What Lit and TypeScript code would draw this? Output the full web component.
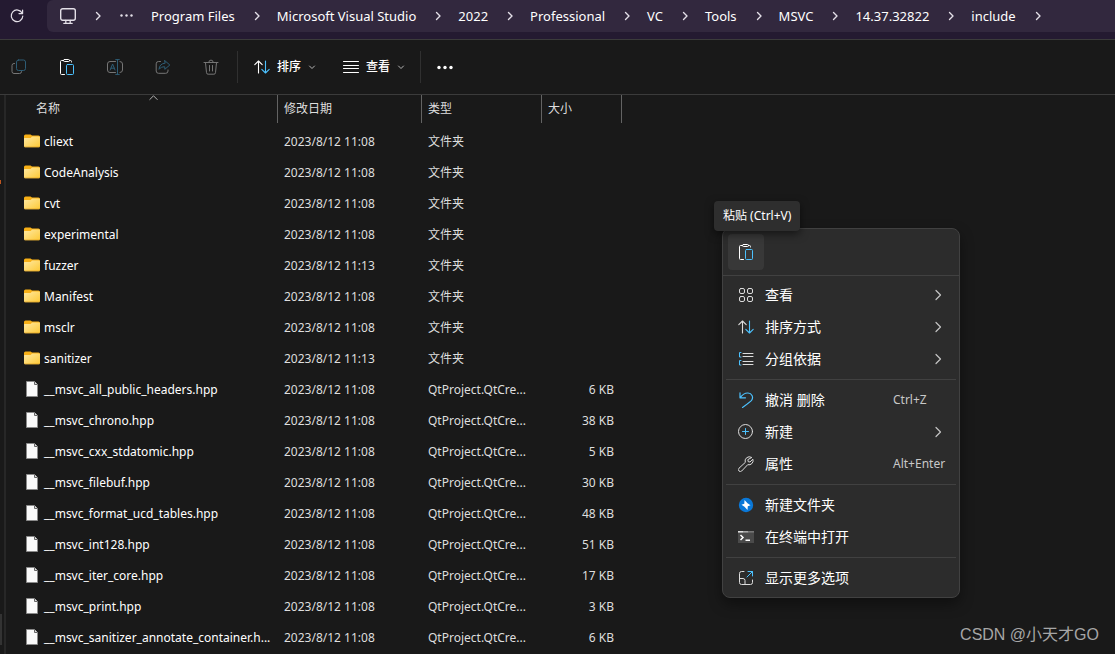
import { LitElement, html, css, svg, nothing, TemplateResult } from "lit";
import { customElement } from "lit/decorators.js";
import { classMap } from "lit/directives/class-map.js";

const line = (body: unknown, size = 16, cls = "") => html`<svg
  class="icon ${cls}" width=${size} height=${size} viewBox="0 0 ${size} ${size}"
  fill="none" stroke="currentColor" stroke-linecap="round" stroke-linejoin="round" aria-hidden="true">${body}</svg>`;

const icons = {
  refresh: line(svg`<path d="M13.2 5.2A5.8 5.8 0 1 0 13.8 8" stroke-width="1.2"/><path d="M13.6 2v3.6H10" stroke-width="1.2"/>`),
  monitor: line(svg`<rect x=".7" y=".7" width="14.6" height="11.6" rx="2" stroke-width="1.4"/><path d="M5.8 12.5v2.6M10.2 12.5v2.6M3.8 15.3h8.4" stroke-width="1.3"/>`),
  more: line(svg`<g fill="currentColor" stroke="none"><circle cx="3.5" cy="7.500" r="1.2"/><circle cx="8.500" cy="7.500" r="1.2"/><circle cx="13.5" cy="7.500" r="1.2"/></g>`),
  moreBold: line(svg`<g fill="currentColor" stroke="none"><circle cx="2" cy="8.500" r="1.7"/><circle cx="8" cy="8.500" r="1.7"/><circle cx="14" cy="8.500" r="1.7"/></g>`),
  crumb: line(svg`<path d="M4.5 2.5 8 6 4.5 9.5" stroke-width="1.4"/>`, 12),
  down: line(svg`<path d="M1.5 3 4 5.5 6.5 3"/>`, 8, "dim"),
  up: line(svg`<path d="M.8 6.5 4.5 2.8l3.7 3.7"/>`, 9, "dim"),
  right: line(svg`<path d="M4 1.500 8.500 6 4 10.500" stroke-width="1.2"/>`, 12, "arrow"),
  copy: line(svg`<path d="M3.5 4.5H3A2 2 0 0 0 1 6.500v6a2 2 0 0 0 2 2h5.500a2 2 0 0 0 2-2V12"/><rect class="blue" x="5.500" y="1" width="9" height="10.500" rx="2"/>`),
  paste: line(svg`<path d="M4.500 1.500H2.500a1 1 0 0 0-1 1V14.500a1 1 0 0 0 1 1H5.500M10.500 1.500h1a1 1 0 0 1 1 1v.5"/><rect x="4.500" y=".5" width="6" height="2" rx="1"/><rect class="blue" x="7.500" y="5.500" width="7" height="10" rx="1"/>`),
  rename: line(svg`<path d="M8.500 2.500H3a2.500 2.500 0 0 0-2.500 2.500v6A2.500 2.500 0 0 0 3 13.500h5.500M13 2.500a2.500 2.500 0 0 1 2.500 2.500v6a2.500 2.500 0 0 1-2.500 2.500"/><path class="blue" d="M3.200 11 5.600 5 8 11M4 9.200h3.200M8.700.6h3.600M10.500.6v14.800M8.700 15.400h3.600"/>`),
  share: line(svg`<path d="M5.500 2.500H3.500A2.300 2.300 0 0 0 1.200 4.800v7.200a2.300 2.300 0 0 0 2.300 2.300h7.200A2.300 2.300 0 0 0 13 12v-1"/><path class="blue" d="M9.800 1.600 14.800 6l-5 4.300V7.800C7.200 7.700 5.500 8.500 4 10.300 4.300 6.800 6.200 4.500 9.800 4.200Z"/>`),
  trash: line(svg`<path d="M1 3.500h14M5.800 3.300a2.200 2.200 0 0 1 4.400 0M2.500 3.700l1 10a1.600 1.600 0 0 0 1.600 1.500h5.800a1.600 1.600 0 0 0 1.600-1.500l1-10M6.500 6.500v5.500M9.500 6.500v5.500"/>`),
  sort: line(svg`<path d="M4.500 14V2M.8 5.700 4.500 2l3.700 3.700" stroke-width="1.1"/><path class="blue" d="M11.500 2v12M7.800 10.300 11.500 14l3.700-3.700" stroke-width="1.1"/>`),
  lines: line(svg`<path d="M.5 2.500h15M.5 6.500h15M.5 9.500h15M.5 13.500h15"/>`),
  grid: line(svg`<rect x="1.500" y="1.500" width="5" height="5" rx="1.500"/><rect x="9.500" y="1.500" width="5" height="5" rx="1.500"/><rect x="1.500" y="9.500" width="5" height="5" rx="1.500"/><rect x="9.500" y="9.500" width="5" height="5" rx="1.500"/>`),
  group: line(svg`<path d="M5 2.500h10M5 5.500h10M5 10.500h10M5 13.500h10"/><path class="blue" d="M3 1.500H1.500v4.500H3M3 9.500H1.500v4.500H3"/>`),
  undo: line(svg`<path class="blue" d="M2 .8v5h5.500M2.200 5.600C4.500 2.500 7 .8 10 1c3.800.3 5.600 3.800 3.800 7-.8 1.500-3 3-9.300 7.400" stroke-width="1.200"/>`),
  plus: line(svg`<circle cx="7.500" cy="7.500" r="7"/><path class="blue" d="M7.500 4.500v6M4.500 7.500h6"/>`),
  wrench: line(svg`<path d="M13.500 1.300A4.300 4.300 0 0 0 7.300 6.400L1 12.200a1.900 1.900 0 0 0 2.700 2.800L9.700 8.700a4.300 4.300 0 0 0 5.200-5.500L12 6 10.200 5.700 9.900 4Z"/>`),
  bolt: html`<svg class="icon" width="16" height="16" viewBox="0 0 16 16" aria-hidden="true"><circle cx="8" cy="8" r="7.200" fill="#0a78d8"/><path d="M6.500 3 9.500 6.300 12.500 8.200 9.800 9.200 9.500 13 6.500 9.800 3.500 7.800 6.300 6.800Z" fill="#fff"/></svg>`,
  terminal: html`<svg class="icon" width="16" height="16" viewBox="0 0 16 16" aria-hidden="true"><path d="M0 2h16v12H0Z" fill="#4a4a4a"/><path d="M0 2h5v1.600H0Z" fill="#ddd"/><path d="M5 2h5.500v1.600H5Z" fill="#a8a8a8"/><path d="M10.500 2H16v1.600h-5.500Z" fill="#777"/><path d="m2.500 6 2.500 2.500L2.500 11M7.500 11.300H12" fill="none" stroke="#fff" stroke-width="1.500"/></svg>`,
  expand: line(svg`<path d="M6 1.500H3.500a2 2 0 0 0-2 2v9a2 2 0 0 0 2 2h9a2 2 0 0 0 2-2V10M1.500 8.500H5a2 2 0 0 1 2 2v4"/><path class="blue" d="M9 7 14.500 1.500M10 1.500h4.500V6"/>`),
  folder: html`<svg class="icon" width="16" height="16" viewBox="0 0 16 16" aria-hidden="true"><defs><linearGradient id="f" x1="0" y1="0" x2="1" y2="1"><stop offset="0" stop-color="#ffe9a3"/><stop offset="1" stop-color="#fdc936"/></linearGradient></defs><path d="M0 2a1.500 1.500 0 0 1 1.500-1.500h5L8 1.500h6.500A1.500 1.500 0 0 1 16 3V6H0Z" fill="#f8b016"/><path d="M0 4.500a.5.500 0 0 1 .5-.5h6.200L8 2.500h7.300a.7.700 0 0 1 .7.700v8.800a1.200 1.200 0 0 1-1.200 1.200H1.200A1.200 1.200 0 0 1 0 12Z" fill="url(#f)"/><path d="M.5 12.900h15" stroke="#e0a020" stroke-width=".6"/></svg>`,
  file: html`<svg class="icon" width="16" height="18" viewBox="0 0 16 18" aria-hidden="true"><path d="M2.500.5h8l3 3v12h-11Z" fill="#fafafa" stroke="#8a8a8a"/><path d="M10.500.5v3h3" fill="#ddd" stroke="#666"/></svg>`,
};

interface Entry { name: string; date: string; type: string; size?: string }

const folder = (name: string, time = "11:08"): Entry => ({ name, date: `2023/8/12 ${time}`, type: "文件夹" });
const file = (name: string, kb: number): Entry => ({ name, date: "2023/8/12 11:08", type: "QtProject.QtCre...", size: `${kb} KB` });

const entries: Entry[] = [
  folder("cliext"), folder("CodeAnalysis"), folder("cvt"), folder("experimental"),
  folder("fuzzer", "11:13"), folder("Manifest"), folder("msclr"), folder("sanitizer", "11:13"),
  file("__msvc_all_public_headers.hpp", 6),
  file("__msvc_chrono.hpp", 38),
  file("__msvc_cxx_stdatomic.hpp", 5),
  file("__msvc_filebuf.hpp", 30),
  file("__msvc_format_ucd_tables.hpp", 48),
  file("__msvc_int128.hpp", 51),
  file("__msvc_iter_core.hpp", 17),
  file("__msvc_print.hpp", 3),
  file("__msvc_sanitizer_annotate_container.h...", 6),
];

const base = css`
  * { box-sizing: border-box; }
  button {
    font: inherit; color: inherit; background: none; border: 0; margin: 0; padding: 0;
    display: flex; align-items: center; text-align: left; white-space: nowrap;
  }
  .icon { display: block; flex: none; }
  .blue { stroke: #4cc2ff; }
  .dim { color: #b4b4b4; }
  .arrow { color: #c4c4c4; }
`;

@customElement("address-bar")
class AddressBar extends LitElement {
  static styles = [base, css`
    :host { display: flex; height: 40px; background: #241a31; border-bottom: 1px solid #3b3b3b; color: #fff; font-size: 13px; line-height: 20px; }
    .refresh { width: 32px; height: 32px; margin-left: 1px; justify-content: center; color: #e4e0e8; }
    .path { flex: 1; min-width: 0; height: 32px; margin-left: 14px; padding-left: 13px; background: #32283e; border-radius: 6px 0 0 6px; display: flex; align-items: center; overflow: hidden; }
    ol { display: flex; align-items: center; list-style: none; margin: 0; padding: 0; }
    li { display: flex; align-items: center; }
    li .icon { color: #e4e0e8; }
    .overflow { padding-right: 17px; }
    .sep { padding: 0 14px 0 16px; }
  `];
  private crumbs = ["Program Files", "Microsoft Visual Studio", "2022", "Professional", "VC", "Tools", "MSVC", "14.37.32822", "include"];
  render() {
    const sep = html`<span class="sep">${icons.crumb}</span>`;
    return html`
      <button class="refresh" aria-label="刷新">${icons.refresh}</button>
      <nav class="path"><ol>
        <li><button aria-label="此电脑">${icons.monitor}</button>${sep}</li>
        <li class="overflow"><button aria-label="更多">${icons.more}</button></li>
        ${this.crumbs.map((c) => html`<li><button>${c}</button>${sep}</li>`)}
      </ol></nav>`;
  }
}

@customElement("command-bar")
class CommandBar extends LitElement {
  static styles = [base, css`
    :host { display: flex; align-items: center; height: 55px; padding-left: 3px; border-bottom: 1px solid #3b3b3b; background: #191919; color: #fff; font-size: 12px; line-height: 18px; font-weight: 500; }
    .tools { display: flex; gap: 16px; }
    .tools button { width: 32px; height: 32px; justify-content: center; }
    .tools button:disabled { opacity: .4; }
    .drops { display: flex; gap: 27px; padding: 0 15px 0 16px; height: 32px; border: solid #303030; border-width: 0 1px; margin-left: 10px; }
    .drops button { gap: 7px; }
    .dots { margin-left: 16px; height: 32px; }
  `];
  render() {
    const tool = (label: string, icon: TemplateResult, off = true) =>
      html`<button aria-label=${label} ?disabled=${off}>${icon}</button>`;
    return html`
      <div class="tools">
        ${tool("复制", icons.copy)}${tool("粘贴", icons.paste, false)}${tool("重命名", icons.rename)}
        ${tool("共享", icons.share)}${tool("删除", icons.trash)}
      </div>
      <div class="drops">
        <button>${icons.sort}排序${icons.down}</button>
        <button>${icons.lines}查看${icons.down}</button>
      </div>
      <button class="dots" aria-label="更多选项">${icons.moreBold}</button>`;
  }
}

@customElement("file-list")
class FileList extends LitElement {
  static styles = [base, css`
    :host { display: block; color: #dedede; font-size: 12px; line-height: 18px; }
    table { border-collapse: separate; border-spacing: 0; table-layout: fixed; width: 616px; }
    .c-name { width: 272px; } .c-date { width: 144px; } .c-type { width: 120px; } .c-size { width: 80px; }
    th { position: relative; height: 28px; padding: 0 0 0 6px; border-right: 1px solid #636363; font-weight: 400; text-align: left; }
    th:first-child { padding-left: 30px; }
    .caret { position: absolute; left: 143px; top: -2px; }
    tbody::before { content: ""; display: block; height: 3px; }
    td { height: 31px; padding: 0 8px 0 6px; white-space: nowrap; overflow: hidden; }
    td:first-child { padding: 0 0 0 18px; color: #fff; }
    .size { text-align: right; }
    .name { display: flex; align-items: center; gap: 4px; }
  `];
  render() {
    return html`<table>
      <colgroup><col class="c-name"><col class="c-date"><col class="c-type"><col class="c-size"></colgroup>
      <thead><tr>
        <th aria-sort="ascending"><button>名称</button><span class="caret">${icons.up}</span></th>
        <th><button>修改日期</button></th><th><button>类型</button></th><th><button>大小</button></th>
      </tr></thead>
      <tbody>${entries.map((e) => html`<tr>
        <td><span class="name">${e.size ? icons.file : icons.folder}<span>${e.name}</span></span></td>
        <td>${e.date}</td><td>${e.type}</td><td class="size">${e.size ?? nothing}</td>
      </tr>`)}</tbody>
    </table>`;
  }
}

interface MenuItem { label: string; icon: TemplateResult; keys?: string; sub?: boolean }

const groups: MenuItem[][] = [
  [
    { label: "查看", icon: icons.grid, sub: true },
    { label: "排序方式", icon: icons.sort, sub: true },
    { label: "分组依据", icon: icons.group, sub: true },
  ],
  [
    { label: "撤消 删除", icon: icons.undo, keys: "Ctrl+Z" },
    { label: "新建", icon: icons.plus, sub: true },
    { label: "属性", icon: icons.wrench, keys: "Alt+Enter" },
  ],
  [
    { label: "新建文件夹", icon: icons.bolt },
    { label: "在终端中打开", icon: icons.terminal },
  ],
  [{ label: "显示更多选项", icon: icons.expand }],
];

@customElement("context-menu")
class ContextMenu extends LitElement {
  static styles = [base, css`
    :host { display: block; width: 238px; background: #2c2c2c; border: 1px solid #414141; border-radius: 8px; box-shadow: 0 6px 14px #0006; color: #fff; font-size: 14px; line-height: 20px; }
    .quick { padding: 5px; border-bottom: 1px solid #414141; }
    .quick button { width: 36px; height: 36px; justify-content: center; border-radius: 4px; background: #383838; }
    .group { padding: 4px 0; margin: 0 3px; border-top: 1px solid #414141; }
    .group.first { border-top: 0; padding-top: 3px; }
    .group:last-child { padding-bottom: 3px; }
    .item { width: 100%; height: 32px; padding: 0 12px; }
    .item .icon { color: #dcdcdc; }
    .label { flex: 1; padding-left: 11px; }
    .keys { width: 51px; color: #c8c8c8; font-size: 12px; }
    .item .arrow { color: #c4c4c4; }
  `];
  render() {
    return html`
      <div class="quick"><button aria-label="粘贴">${icons.paste}</button></div>
      ${groups.map((g, i) => html`<div class=${classMap({ group: true, first: i === 0 })} role="group">
        ${g.map((m) => html`<button class="item" role="menuitem">${m.icon}<span class="label">${m.label}</span>${m.keys
          ? html`<span class="keys">${m.keys}</span>` : nothing}${m.sub ? icons.right : nothing}</button>`)}
      </div>`)}`;
  }
}

@customElement("app-root")
class AppRoot extends LitElement {
  static styles = [base, css`
    :host { display: flex; flex-direction: column; position: relative; height: 100vh; overflow: hidden; background: #191919; font-family: "Noto Sans", "Noto Sans CJK SC", sans-serif; }
    .body { flex: 1; min-height: 0; display: flex; }
    .pane { width: 6px; flex: none; border-right: 2px solid #272727; display: flex; flex-direction: column; justify-content: space-between; padding: 85px 0 9px; }
    .mark { width: 1px; height: 4px; background: #c0561f; }
    .thumb { width: 2px; height: 31px; background: #333; }
    context-menu { position: absolute; left: 722px; top: 228px; }
    .tip { position: absolute; left: 714px; top: 201px; height: 30px; padding: 6px 9px; border-radius: 4px; background: #2e2e2e; box-shadow: 0 3px 8px #0008; color: #fff; font-size: 12px; line-height: 18px; white-space: nowrap; }
    .watermark { position: absolute; right: 16px; bottom: 7px; color: #a6a6a6; font: 16px/24px "Liberation Sans", "Noto Sans CJK SC", sans-serif; }
  `];
  render() {
    return html`
      <address-bar></address-bar>
      <command-bar></command-bar>
      <div class="body">
        <div class="pane"><span class="mark"></span><span class="thumb"></span></div>
        <file-list></file-list>
      </div>
      <context-menu role="menu"></context-menu>
      <div class="tip" role="tooltip">粘贴 (Ctrl+V)</div>
      <div class="watermark">CSDN @小天才GO</div>`;
  }
}
